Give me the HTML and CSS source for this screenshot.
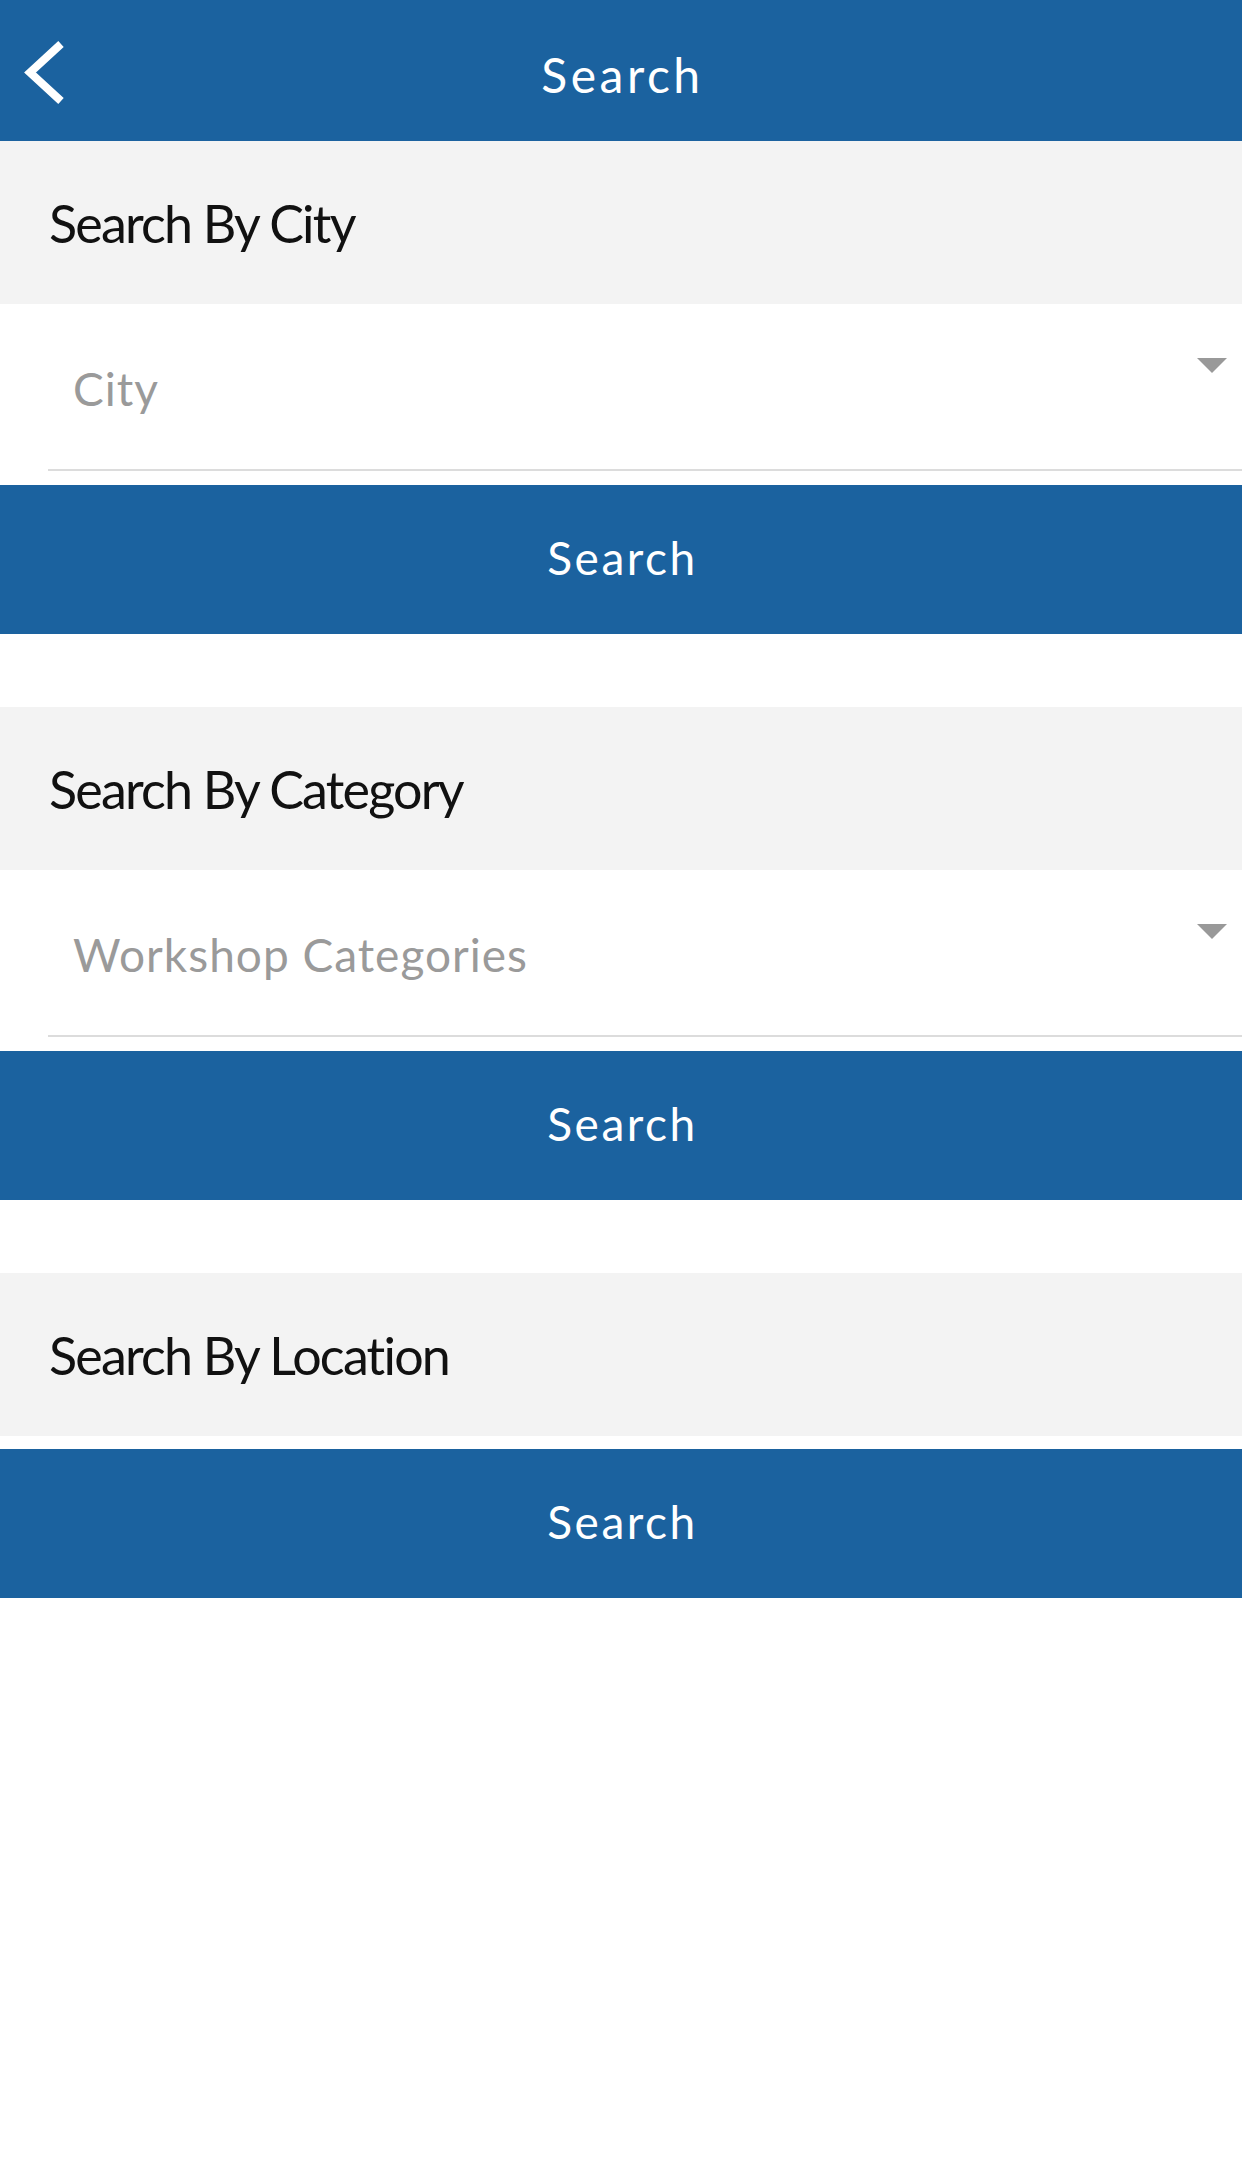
FILE: index.html
```html
<!DOCTYPE html>
<html>
<head>
<meta charset="utf-8">
<link rel="stylesheet" href="styles.css">
</head>
<body>
<header class="topbar">
  <div class="topbar-side">
    <svg class="back" width="80" height="141" viewBox="0 0 80 141">
      <polyline points="61,44 30,72.5 61,101" fill="none" stroke="#fff" stroke-width="8"/>
    </svg>
  </div>
  <div class="topbar-title">Search</div>
  <div class="topbar-side"></div>
</header>

<section class="block">
  <div class="block-label">Search By City</div>
  <div class="select">
    <span class="select-text">City</span>
    <span class="caret"></span>
  </div>
  <button class="btn">Search</button>
</section>

<section class="block">
  <div class="block-label">Search By Category</div>
  <div class="select">
    <span class="select-text">Workshop Categories</span>
    <span class="caret"></span>
  </div>
  <button class="btn">Search</button>
</section>

<section class="block">
  <div class="block-label">Search By Location</div>
  <button class="btn btn-tight">Search</button>
</section>
</body>
</html>
```

FILE: styles.css
```css
* { box-sizing: border-box; }
html, body { margin: 0; padding: 0; background: #fff; }
body { font-family: "Lato", "Open Sans", sans-serif; width: 1242px; }

.topbar {
  height: 141px;
  background: #1b629f;
  display: grid;
  grid-template-columns: 200px 1fr 200px;
  align-items: start;
}
.back { display: block; }
.topbar-title {
  color: #fff;
  font-size: 48px;
  line-height: 48px;
  padding-top: 51px;
  padding-left: 3px;
  text-align: center;
  letter-spacing: 3.5px;
}

.block { margin-bottom: 73px; }
.block-label {
  height: 163px;
  background: #f3f3f3;
  color: #111;
  font-size: 52px;
  line-height: 52px;
  letter-spacing: -1.8px;
  padding: 56px 0 0 49px;
}
.select {
  height: 167px;
  margin-left: 48px;
  border-bottom: 2px solid #dcdcdc;
  position: relative;
  padding: 62px 0 0 25px;
}
.select-text {
  color: #9a9a9a;
  font-size: 46px;
  line-height: 46px;
  letter-spacing: 1px;
}
.caret {
  position: absolute;
  right: 15px;
  top: 54px;
  width: 0; height: 0;
  border-left: 15px solid transparent;
  border-right: 15px solid transparent;
  border-top: 15px solid #999;
}
.btn {
  display: block;
  width: 100%;
  height: 149px;
  margin-top: 14px;
  border: 0;
  background: #1b629f;
  color: #fff;
  font-family: inherit;
  font-size: 46px;
  letter-spacing: 2.5px;
  padding: 0 0 5px 3px;
}
.btn-tight { margin-top: 13px; }
```
